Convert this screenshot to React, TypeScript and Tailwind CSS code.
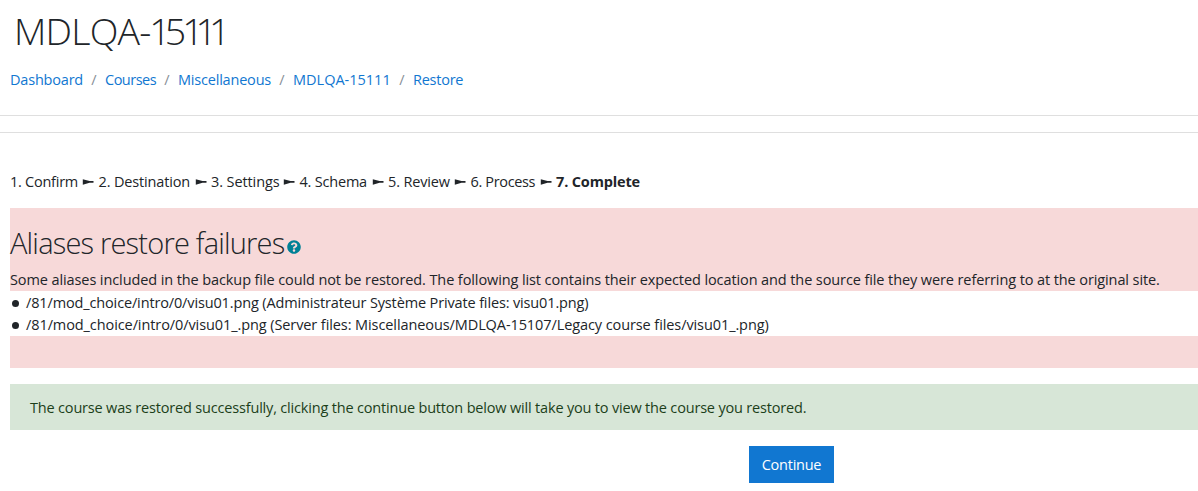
import React from 'react';
import { FaQuestionCircle } from 'react-icons/fa';

const crumbs = [
  { label: 'Dashboard', style: 'w-[73px] tracking-[-0.2px]' },
  { label: 'Courses', style: 'w-[51px] tracking-[-0.5px]' },
  { label: 'Miscellaneous', style: 'w-[93px] tracking-[-0.2px]' },
  { label: 'MDLQA-15111', style: 'w-[98px]' },
  { label: 'Restore', style: 'w-[50px] tracking-[-0.25px]' },
];

const steps = [
  { label: '1. Confirm', style: 'w-[68px] tracking-[-0.25px]' },
  { label: '2. Destination', style: 'w-[92px] tracking-[-0.15px]' },
  { label: '3. Settings', style: 'w-[68px] tracking-[-0.1px]' },
  { label: '4. Schema', style: 'w-[68px] tracking-[-0.2px]' },
  { label: '5. Review', style: 'w-[62px] tracking-[-0.15px]' },
  { label: '6. Process', style: 'w-[65px] tracking-[-0.35px]' },
];

const failures = [
  {
    text: '/81/mod_choice/intro/0/visu01.png (Administrateur Système Private files: visu01.png)',
    style: 'tracking-[-0.14px]',
  },
  {
    text: '/81/mod_choice/intro/0/visu01_.png (Server files: Miscellaneous/MDLQA-15107/Legacy course files/visu01_.png)',
    style: 'tracking-[-0.09px]',
  },
];

const StepArrow = () => (
  <svg className="mx-[4.25px] h-[6px] w-[12px] shrink-0" viewBox="0 0 12 6" fill="currentColor">
    <path d="M0.8 0.2 L7.5 2 H11.5 V3.8 H7.5 L0.8 5.8 Z" />
  </svg>
);

const App = () => {
  return (
    <div className="h-[491px] overflow-hidden whitespace-nowrap bg-white font-['Open_Sans',sans-serif] text-[14.5px] leading-[22.5px] text-[#212529]">
      {/* Header */}
      <header className="h-[116px] border-b border-[#dfdfdf] pl-[10px] pt-[8px]">
        <h1 className="pl-[4px] text-[37.5px] font-light leading-[45px]">
          <span className="tracking-[-0.8px]">MDLQA</span>
          <span className="tracking-[-2px]">-</span>
          <span className="tracking-[-6px]">1</span>
          <span className="tracking-[-4px]">5</span>
          <span className="tracking-[-8px]">111</span>
        </h1>
        <nav className="mt-[16px] flex items-center text-[#1177d1]">
          {crumbs.map((crumb, index) => (
            <React.Fragment key={crumb.label}>
              {index > 0 && <span className="w-[22px] text-center text-[#868e96]">/</span>}
              <a href="#" className={crumb.style}>
                {crumb.label}
              </a>
            </React.Fragment>
          ))}
        </nav>
      </header>

      <main className="mt-4 border-t border-[#dfdfdf] pl-[10px] pt-[38px]">
        {/* Restore progress */}
        <div className="flex items-center">
          {steps.map((step) => (
            <React.Fragment key={step.label}>
              <span className={step.style}>{step.label}</span>
              <StepArrow />
            </React.Fragment>
          ))}
          <span className="font-bold tracking-[-0.15px]">7. Complete</span>
        </div>

        {/* Failures */}
        <section className="mt-[14.5px] h-[160px] bg-[#f7d9d9]">
          <div className="h-[83px] pt-[17px]">
            <h2 className="flex h-[36px] items-center text-[29px] font-light leading-[36px]">
              <span className="w-[277px] tracking-[-0.8px]">Aliases restore failures</span>
              <FaQuestionCircle className="mt-[8px] size-[14px] text-[#008196]" />
            </h2>
            <p className="mt-[7.5px] tracking-[-0.1px]">
              Some aliases included in the backup file could not be restored. The following list contains
              their expected location and the source file they were referring to at the original site.
            </p>
          </div>
          <ul className="h-[45px] bg-white pt-px">
            {failures.map((failure) => (
              <li key={failure.text} className="flex h-[22px] items-center">
                <span className="ml-[2px] mr-[7px] size-[7px] rounded-full bg-[#212529]" />
                <span className={`pt-px ${failure.style}`}>{failure.text}</span>
              </li>
            ))}
          </ul>
        </section>

        <div className="mt-4 h-[46px] bg-[#d7e6d7] pl-5 pt-[13px] tracking-[-0.18px] text-[#1c3f1a]">
          The course was restored successfully, clicking the continue button below will take you to view the
          course you restored.
        </div>

        <button className="ml-[739px] mt-4 flex h-[37px] w-[85px] items-center justify-center bg-[#1177d1] pt-px tracking-[-0.25px] text-white">
          Continue
        </button>
      </main>
    </div>
  );
};

export default App;
